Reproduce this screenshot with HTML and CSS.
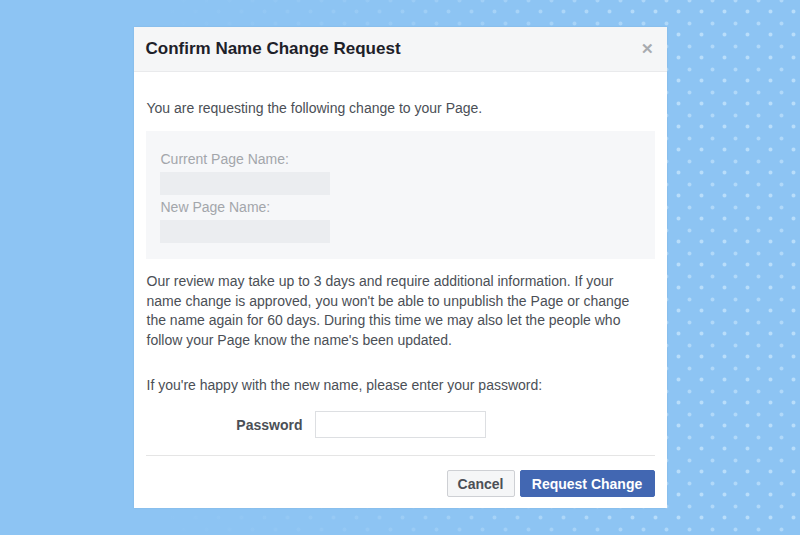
FILE: index.html
```html
<!DOCTYPE html>
<html>
<head>
<meta charset="utf-8">
<link rel="stylesheet" href="styles.css">
</head>
<body>
<div class="dialog">
  <div class="header">
    <span class="title">Confirm Name Change Request</span>
    <span class="close">&#x2715;</span>
  </div>
  <div class="body">
    <p class="intro">You are requesting the following change to your Page.</p>
    <div class="names">
      <div class="label">Current Page Name:</div>
      <div class="bar"></div>
      <div class="label">New Page Name:</div>
      <div class="bar"></div>
    </div>
    <p class="info">Our review may take up to 3 days and require additional information. If your name change is approved, you won't be able to unpublish the Page or change the name again for 60 days. During this time we may also let the people who follow your Page know the name's been updated.</p>
    <p class="prompt">If you're happy with the new name, please enter your password:</p>
    <div class="pwrow">
      <label class="pwlabel">Password</label>
      <div class="pwinput"></div>
    </div>
  </div>
  <div class="footer">
    <button class="btn cancel">Cancel</button>
    <button class="btn primary">Request Change</button>
  </div>
</div>
</body>
</html>
```

FILE: styles.css
```css
html, body {
  margin: 0;
  height: 100%;
}
body {
  background-color: #8dc4f3;
  background-image:
    linear-gradient(90deg, #8dc4f3 0%, #8dc4f3 20%, rgba(141,196,243,0.75) 45%, rgba(141,196,243,0) 85%),
    radial-gradient(circle, rgba(196, 228, 252, 0.8) 1.4px, transparent 2.4px),
    radial-gradient(circle, rgba(196, 228, 252, 0.65) 1.4px, transparent 2.4px);
  background-size: 100% 100%, 23px 23px, 23px 23px;
  background-position: 0 0, 0 0, 11px 12px;
  display: flex;
  align-items: center;
  justify-content: center;
  font-family: "Liberation Sans", Arial, sans-serif;
}
.dialog {
  width: 533px;
  height: 481px;
  background: #fff;
  display: flex;
  flex-direction: column;
  box-shadow: 0 0 2px rgba(0,0,0,0.08);
}
.header {
  height: 45px;
  background: #f5f6f7;
  border-bottom: 1px solid #e9eaec;
  box-sizing: border-box;
  display: flex;
  align-items: center;
  justify-content: space-between;
  padding: 0 13px 0 12px;
}
.title {
  font-weight: bold;
  font-size: 17px;
  color: #1d2129;
}
.close {
  color: #a8abaf;
  font-size: 15px;
  font-weight: bold;
}
.body {
  padding: 0 12px;
  color: #4b4f56;
  font-size: 14px;
  flex: 1;
}
.intro {
  margin: 27px 0 0 1px;
  line-height: 18px;
}
.names {
  margin-top: 14px;
  background: #f6f7f9;
  height: 128px;
  box-sizing: border-box;
  padding: 19px 15px 0 14px;
}
.label {
  color: #a3a6ab;
  font-size: 14px;
  line-height: 18px;
  padding-left: 1px;
}
.bar {
  width: 170px;
  height: 23px;
  background: #ebedf0;
  margin: 4px 0 3px;
}
.info {
  margin: 13px 0 0 1px;
  max-width: 502px;
  line-height: 19.5px;
}
.prompt {
  margin: 26px 0 0 1px;
  line-height: 19px;
}
.pwrow {
  margin-top: 16px;
  display: flex;
  align-items: center;
  padding-left: 75px;
  padding-bottom: 17px;
  border-bottom: 1px solid #e5e5e5;
}
.pwlabel {
  font-weight: bold;
  color: #4b4f56;
  width: 82px;
  text-align: right;
  margin-right: 12px;
}
.pwinput {
  width: 171px;
  height: 27px;
  border: 1px solid #dddfe2;
  box-sizing: border-box;
}
.footer {
  display: flex;
  justify-content: flex-end;
  gap: 5px;
  padding: 0 12px 11px;
  margin-top: 14px;
}
.btn {
  height: 27px;
  font-family: "Liberation Sans", Arial, sans-serif;
  font-size: 14px;
  font-weight: bold;
  border-radius: 2px;
  padding: 0 10px;
}
.cancel {
  background: #f5f6f7;
  border: 1px solid #ced0d4;
  color: #4b4f56;
  width: 68px;
}
.primary {
  background: #4267b2;
  border: 1px solid #4267b2;
  color: #fff;
  width: 135px;
}
```
